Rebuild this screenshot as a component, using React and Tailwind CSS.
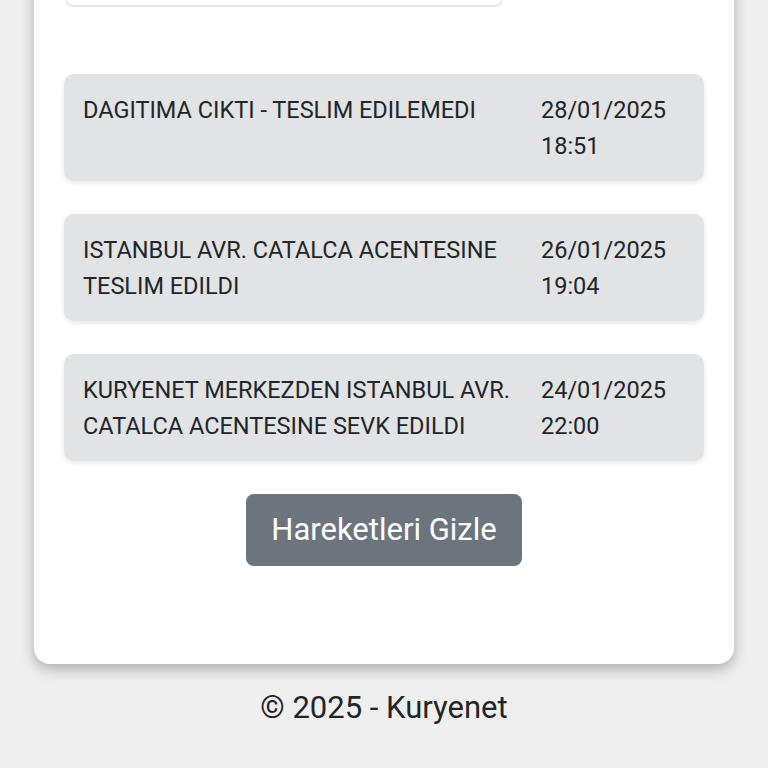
const MOVEMENTS = [
  { text: "DAGITIMA CIKTI - TESLIM EDILEMEDI", date: "28/01/2025", time: "18:51" },
  { text: "ISTANBUL AVR. CATALCA ACENTESINE TESLIM EDILDI", date: "26/01/2025", time: "19:04" },
  { text: "KURYENET MERKEZDEN ISTANBUL AVR. CATALCA ACENTESINE SEVK EDILDI", date: "24/01/2025", time: "22:00" },
];

function MovementRow({ item }) {
  return (
    <li className="flex h-[107px] rounded-[10px] bg-[#e2e3e5] px-[19px] pt-[18px] shadow-[0_2px_5px_rgba(0,0,0,0.10)]">
      <p className="flex-1 pr-[16px] text-[23.5px] leading-[36px] text-[#212529]">{item.text}</p>
      <div className="w-[144px] text-[23.5px] leading-[36px] text-[#212529]">
        <div>{item.date}</div>
        <div>{item.time}</div>
      </div>
    </li>
  );
}

export default function App() {
  return (
    <div
      className="min-h-screen overflow-hidden bg-[#efefef] px-[34px] pb-[40px]"
      style={{ fontFamily: "Roboto, 'Noto Sans', sans-serif" }}
    >
      <div className="-mt-[71px] rounded-[16px] bg-white pt-[30px] pb-[98px] shadow-[0_5px_14px_rgba(0,0,0,0.28)]">
        <div className="ml-[31px] h-[48px] w-[438px] rounded-[8px] border-2 border-[#e6e6e6] bg-white" />

        <ul className="mt-[67px] flex flex-col gap-[33px] px-[30px]">
          {MOVEMENTS.map((m) => (
            <MovementRow key={m.date} item={m} />
          ))}
        </ul>

        <div className="mt-[33px] flex justify-center">
          <button
            type="button"
            className="h-[72px] w-[276px] rounded-[8px] bg-[#6c757d] text-[31px] text-white"
          >
            Hareketleri Gizle
          </button>
        </div>
      </div>

      <footer className="mt-[24px] text-center text-[31px] leading-[40px] text-[#212529]">
        © 2025 - Kuryenet
      </footer>
    </div>
  );
}
